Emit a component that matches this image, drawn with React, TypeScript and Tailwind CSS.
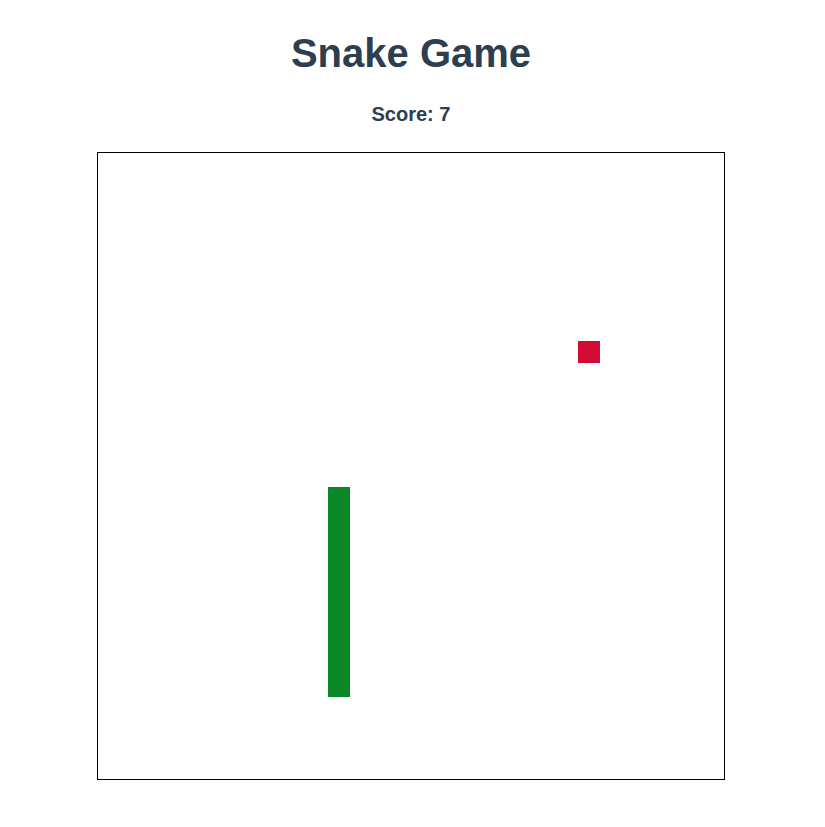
const BOARD = 626;
const CELLS = 30;
const CELL = BOARD / CELLS;

const snake = [16, 17, 18, 19, 20, 21, 22, 23, 24, 25].map((y) => ({ x: 11, y }));
const food = { x: 23, y: 9 };

export default function App() {
  return (
    <div className="min-h-screen bg-white font-['Liberation_Sans',Arial,sans-serif]">
      <div className="w-[822px] flex flex-col items-center pt-[33px]">
        <h1 className="text-[40px] leading-none font-bold text-[#2c3e50]">Snake Game</h1>
        <p className="mt-[31px] text-[20px] leading-none font-bold text-[#2c3e50]">Score: 7</p>
        <div className="mt-[28px] border border-black">
          <div className="relative w-[626px] h-[626px] bg-white">
            {snake.map((s, i) => (
              <div
                key={i}
                className="absolute bg-[#0a8827]"
                style={{ left: s.x * CELL, top: s.y * CELL, width: 22, height: 22 }}
              />
            ))}
            <div
              className="absolute bg-[#d20b34]"
              style={{ left: food.x * CELL, top: food.y * CELL, width: 22, height: 22 }}
            />
          </div>
        </div>
      </div>
    </div>
  );
}
